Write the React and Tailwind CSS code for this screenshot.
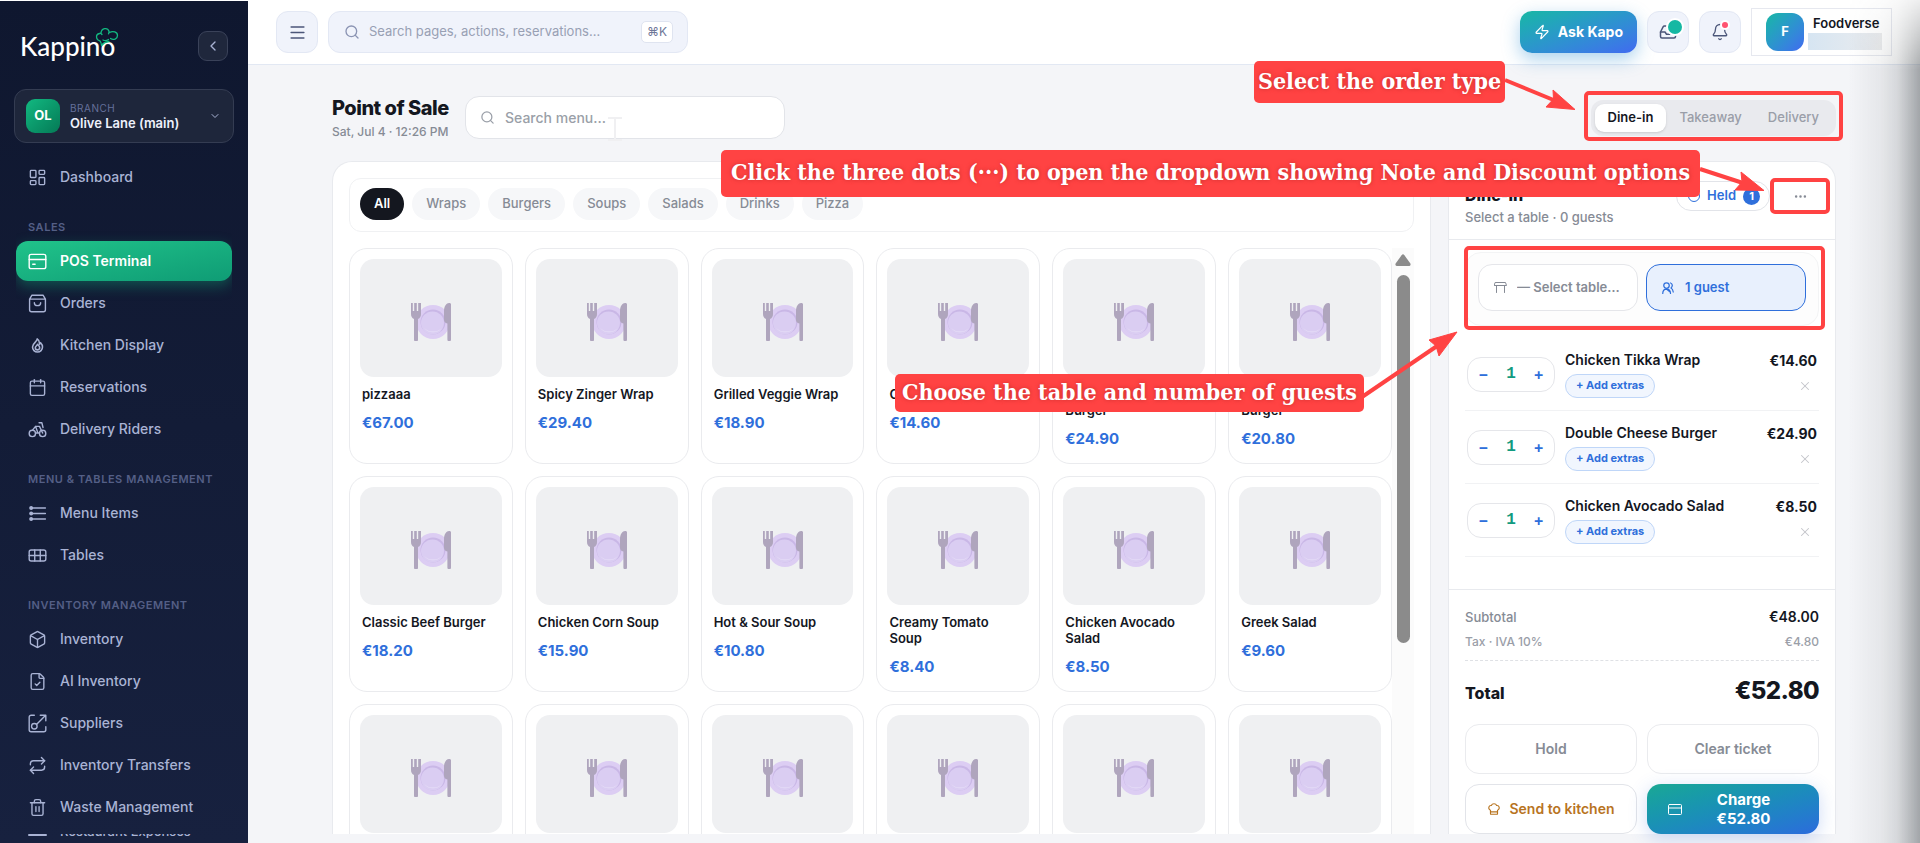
import { useState } from 'react';
import {
  LayoutDashboard, Calendar, Box, FileCheck, Repeat, Trash2, Inbox,
  Search, Menu, ChevronLeft, ChevronDown, Zap, Bell, ChefHat, Ellipsis, X,
} from 'lucide-react';

const NAV = [
  { items: [{ label: 'Dashboard', icon: LayoutDashboard }] },
  {
    title: 'Sales',
    items: [
      { label: 'POS Terminal', icon: CardIcon, active: true },
      { label: 'Orders', icon: BagIcon },
      { label: 'Kitchen Display', icon: FlameIcon, small: true },
      { label: 'Reservations', icon: Calendar },
      { label: 'Delivery Riders', icon: RiderIcon },
    ],
  },
  {
    title: 'Menu & Tables Management',
    items: [
      { label: 'Menu Items', icon: MenuListIcon },
      { label: 'Tables', icon: TableGridIcon },
    ],
  },
  {
    title: 'Inventory Management',
    items: [
      { label: 'Inventory', icon: Box },
      { label: 'AI Inventory', icon: FileCheck },
      { label: 'Suppliers', icon: SupplierIcon },
      { label: 'Inventory Transfers', icon: Repeat },
      { label: 'Waste Management', icon: Trash2 },
    ],
  },
];

const CATEGORIES = ['All', 'Wraps', 'Burgers', 'Soups', 'Salads', 'Drinks', 'Pizza'];
const ORDER_TYPES = ['Dine-in', 'Takeaway', 'Delivery'];

const PRODUCTS = [
  { name: 'pizzaaa', price: '€67.00' },
  { name: 'Spicy Zinger Wrap', price: '€29.40' },
  { name: 'Grilled Veggie Wrap', price: '€18.90' },
  { name: 'Chicken Tikka Wrap', price: '€14.60' },
  { name: 'Double Cheese Burger', price: '€24.90' },
  { name: 'Crispy Chicken Burger', price: '€20.80' },
  { name: 'Classic Beef Burger', price: '€18.20' },
  { name: 'Chicken Corn Soup', price: '€15.90' },
  { name: 'Hot & Sour Soup', price: '€10.80' },
  { name: 'Creamy Tomato Soup', price: '€8.40' },
  { name: 'Chicken Avocado Salad', price: '€8.50' },
  { name: 'Greek Salad', price: '€9.60' },
  { name: 'Caesar Salad', price: '€9.20' },
  { name: 'Mango Lassi', price: '€4.50' },
  { name: 'Fresh Lemonade', price: '€3.90' },
  { name: 'Iced Tea', price: '€3.50' },
  { name: 'Margherita', price: '€11.00' },
  { name: 'Pepperoni', price: '€12.50' },
];

const TICKET = [
  { name: 'Chicken Tikka Wrap', price: '€14.60', qty: 1 },
  { name: 'Double Cheese Burger', price: '€24.90', qty: 1 },
  { name: 'Chicken Avocado Salad', price: '€8.50', qty: 1 },
];

export default function App() {
  return (
    <div className="relative flex h-screen overflow-hidden bg-[#f4f5f8] font-['Inter',sans-serif] text-[#14171f]">
      <Sidebar />
      <div className="flex min-w-0 flex-1 flex-col">
        <TopBar />
        <PointOfSale />
      </div>
      <div className="pointer-events-none absolute inset-y-0 right-0 w-[72px] bg-[linear-gradient(to_right,rgba(70,76,80,0)_0%,rgba(70,76,80,0.08)_45%,rgba(70,76,80,0.17)_68%,rgba(70,76,80,0.47)_100%)] [mask-image:linear-gradient(to_bottom,rgba(0,0,0,0.2),black_70px)]" />
      <Callouts />
    </div>
  );
}

function Sidebar() {
  return (
    <aside className="flex w-[248px] shrink-0 flex-col border-t border-white bg-linear-to-b from-[#0f172f] to-[#17213f] text-[#a9b3d4]">
      <div className="flex h-[60px] items-end justify-between pl-5 pr-5">
        <Logo />
        <button aria-label="Collapse sidebar" className="flex size-[30px] items-center justify-center rounded-[9px] border border-[#3a4259] bg-[#1f273c]">
          <ChevronLeft className="size-4" />
        </button>
      </div>

      <button className="mx-[14px] mt-7 flex h-[54px] shrink-0 items-center rounded-xl border border-[#343c52] bg-[#1e263b] pl-[11px] pr-3 text-left">
        <span className="flex size-[34px] items-center justify-center rounded-[9px] bg-linear-to-br from-[#12b981] to-[#057a56] text-[13px] font-bold text-white">
          OL
        </span>
        <span className="ml-[10px] flex-1">
          <span className="block text-[10px] leading-[14px] tracking-wider text-[#65709a]">BRANCH</span>
          <span className="block text-[13px] font-semibold leading-4 text-[#eef1fb]">Olive Lane (main)</span>
        </span>
        <ChevronDown className="size-3" />
      </button>

      <nav className="mx-4 mt-[14px] min-h-0 flex-1 overflow-hidden">
        {NAV.map((group, i) => (
          <div key={i} className={i ? 'mt-[23px]' : ''}>
            {group.title && (
              <h2 className="px-3 pb-[7px] text-[11px] font-semibold uppercase leading-[14px] tracking-wider text-[#545f86]">
                {group.title}
              </h2>
            )}
            <ul className="space-y-[2px]">
              {group.items.map(item => <NavItem key={item.label} {...item} />)}
            </ul>
          </div>
        ))}
      </nav>

      <div className="mx-4 mb-[5px] flex h-1 shrink-0 items-end gap-[13px] overflow-hidden pl-3 text-[13px] font-medium leading-[14px]">
        <span className="mb-[2px] h-[2px] w-[19px] rounded-full bg-current" />
        <a href="#expenses">Restaurant Expenses</a>
      </div>
    </aside>
  );
}

function NavItem({ label, icon: Icon, active, small }) {
  return (
    <li>
      <a
        href="#"
        className={`flex h-10 items-center gap-[13px] rounded-xl px-3 text-sm ${
          active
            ? 'bg-linear-to-br from-[#20c38a] to-[#0f9c75] font-semibold text-white shadow-[0_5px_14px_rgba(16,185,129,0.35)]'
            : 'font-medium'
        }`}
      >
        <span className="flex size-[19px] items-center justify-center">
          <Icon className={small ? 'size-[15px]' : 'size-[19px]'} strokeWidth={small ? 2.5 : 1.75} />
        </span>
        {label}
      </a>
    </li>
  );
}

function TopBar() {
  return (
    <header className="flex h-[65px] shrink-0 items-center border-b border-[#e2e8f3] bg-white pl-7 pr-7">
      <button aria-label="Toggle menu" className="flex size-[42px] items-center justify-center rounded-xl border border-[#e3e8f4] bg-[#f0f3fb] text-[#4b5679]">
        <Menu className="size-[19px]" />
      </button>
      <label className="ml-[10px] flex h-[42px] w-[360px] items-center rounded-xl border border-[#e3e8f4] bg-[#f0f3fb] pl-[15px] pr-[14px]">
        <Search className="size-4 shrink-0 text-[#8b94b3]" />
        <input
          aria-label="Search pages"
          placeholder="Search pages, actions, reservations…"
          className="ml-[9px] min-w-0 flex-1 bg-transparent text-[13px] outline-none placeholder:text-[#98a0b4]"
        />
        <kbd className="flex h-[22px] w-8 items-center justify-center rounded-[5px] border border-[#dfe4f0] bg-white font-['Inter','DejaVu_Sans',sans-serif] text-xs text-[#6d7697]">
          ⌘K
        </kbd>
      </label>

      <div className="ml-auto flex items-center gap-[10px]">
        <button className="flex h-[42px] items-center gap-2 rounded-xl bg-linear-to-br from-[#18b7a4] to-[#4169f0] px-[14px] text-sm font-bold text-white shadow-[0_6px_18px_rgba(40,140,210,0.4)]">
          <Zap className="size-4" strokeWidth={1.75} />
          Ask Kapo
        </button>
        <button aria-label="Inbox" className="relative flex size-[42px] items-center justify-center rounded-xl border border-[#e3e8f4] bg-[#f0f3fb] text-[#4b5679]">
          <Inbox className="size-[18px]" />
          <span className="absolute right-[6px] top-2 size-[14px] rounded-full bg-[#16b8a3] ring-2 ring-white" />
        </button>
        <button aria-label="Notifications" className="relative flex size-[42px] items-center justify-center rounded-xl border border-[#e3e8f4] bg-[#f0f3fb] text-[#4b5679]">
          <Bell className="size-[18px]" strokeWidth={1.75} />
          <span className="absolute right-3 top-[10px] size-[6px] rounded-full bg-[#ff5470] ring-2 ring-white" />
        </button>
        <button className="flex h-12 w-[141px] items-center border border-[#e6e8ef] pl-[14px] text-left">
          <span className="flex size-[38px] shrink-0 items-center justify-center rounded-xl bg-linear-to-br from-[#18b7a4] to-[#4169f0] text-[13px] font-bold text-white">
            F
          </span>
          <span className="ml-1 flex flex-col">
            <span className="pl-[5px] text-[13px] font-semibold leading-[17px]">Foodverse</span>
            <span className="mt-[1px] h-[17px] w-[74px] bg-linear-to-r from-[#d6e5f2] to-[#ebecee]" />
          </span>
        </button>
      </div>
    </header>
  );
}

function PointOfSale() {
  const [type, setType] = useState('Dine-in');

  return (
    <main className="flex min-h-0 flex-1 flex-col pb-[9px] pl-[84px] pr-[84px] pt-[31px]">
      <div className="flex h-[43px] shrink-0 items-center">
        <div className="w-[133px]">
          <h1 className="whitespace-nowrap text-xl font-extrabold leading-7 tracking-tight">Point of Sale</h1>
          <p className="whitespace-nowrap text-xs font-medium leading-5 text-[#868b95]">Sat, Jul 4 · 12:26 PM</p>
        </div>
        <label className="flex h-[43px] w-80 items-center rounded-[14px] border border-[#e2e4e9] bg-white px-[14px]">
          <Search className="size-[15px] shrink-0 text-[#9a9fa8]" />
          <input
            aria-label="Search menu"
            placeholder="Search menu…"
            className="ml-[10px] min-w-0 flex-1 text-sm font-medium outline-none placeholder:text-[#9a9fa8]"
          />
        </label>
        <div className="relative ml-auto flex h-9 items-center rounded-xl bg-[#e9eaee] p-1">
          {ORDER_TYPES.map(t => (
            <button
              key={t}
              onClick={() => setType(t)}
              className={`h-7 rounded-[9px] px-[13px] text-[13px] ${
                t === type ? 'bg-white font-semibold shadow-sm' : 'font-medium text-[#9a9ea8]'
              }`}
            >
              {t}
            </button>
          ))}
          <Ring className="-inset-x-[7px] -bottom-[5px] -top-[9px]" />
        </div>
      </div>

      <div className="mt-[22px] flex min-h-0 flex-1 gap-[17px]">
        <MenuPanel />
        <TicketPanel type={type} />
      </div>
    </main>
  );
}

function MenuPanel() {
  const [category, setCategory] = useState('All');

  return (
    <section className="flex min-w-0 flex-1 flex-col overflow-hidden rounded-t-[20px] border border-b-0 border-[#e8eaee] bg-white px-4 pt-4">
      <div className="flex h-[54px] shrink-0 gap-2 rounded-xl border border-[#f0f1f3] px-[10px] pt-[9px]">
        {CATEGORIES.map(c => (
          <button
            key={c}
            onClick={() => setCategory(c)}
            className={`h-8 rounded-full px-[14px] text-[13px] ${
              c === category ? 'bg-[#14171f] font-semibold text-white' : 'bg-[#f6f7f9] font-medium text-[#868b95]'
            }`}
          >
            {c}
          </button>
        ))}
      </div>

      <div className="mt-4 flex min-h-0 flex-1">
        <div className="grid min-w-0 flex-1 grid-cols-6 content-start gap-3 overflow-hidden">
          {PRODUCTS.map(p => <ProductCard key={p.name} {...p} />)}
        </div>
        <div className="flex w-[22px] flex-col items-center bg-[#fbfbfb] pt-[6px]">
          <svg className="h-[12px] w-[16px] text-[#8b8b8b]" viewBox="0 0 16 12" fill="currentColor">
            <path d="M6.600 1.200Q8-.6 9.400 1.200L15.400 9.400Q16 12 14 12H2Q0 12 .6 9.400Z" />
          </svg>
          <span className="mt-[9px] h-[368px] w-[13px] rounded-full bg-[#8b8b8b]" />
        </div>
      </div>
    </section>
  );
}

function ProductCard({ name, price }) {
  return (
    <button className="flex h-[216px] flex-col rounded-[18px] border border-[#eaebee] bg-white p-[10px] text-left">
      <span className="flex h-[118px] w-full shrink-0 items-center justify-center rounded-[14px] bg-[#eff0f2] pt-2">
        <PlateIcon className="h-[38px] w-[42px]" />
      </span>
      <span className="mt-[9px] block pl-[2px] pr-[10px] text-[13px] font-semibold leading-4">{name}</span>
      <span className="mt-[11px] block pl-[2px] text-[15px] font-bold leading-5 text-[#2f6fdb]">{price}</span>
    </button>
  );
}

function TicketPanel({ type }) {
  return (
    <section className="flex w-[388px] shrink-0 flex-col rounded-t-[20px] border border-b-0 border-[#e8eaee] bg-white">
      <div className="flex h-[78px] shrink-0 items-end justify-between border-b border-[#e8eaee] pb-3 pl-4 pr-[9px]">
        <div>
          <h2 className="text-base font-extrabold leading-6">{type}</h2>
          <p className="text-[13px] font-medium leading-5 text-[#868b95]">Select a table · 0 guests</p>
        </div>
        <div className="mb-[13px] flex items-center">
          <button className="flex h-[30px] items-center gap-[7px] rounded-full border border-[#e2e4e9] pl-[11px] pr-[9px] text-[13px] font-semibold text-[#2f6fdb]">
            <span className="size-3 rounded-full border border-[#2f6fdb]" />
            Held
            <span className="flex size-[17px] items-center justify-center rounded-full bg-[#2f6fdb] text-[11px] font-bold text-white">1</span>
          </button>
          <button aria-label="More options" className="relative ml-1 flex h-9 w-[52px] items-center justify-center text-[#868b95]">
            <Ellipsis className="size-[15px]" />
            <Ring className="-inset-x-1 inset-y-0" />
          </button>
        </div>
      </div>

      <div className="min-h-0 flex-1 px-4 pt-3">
        <div className="relative grid h-[74px] grid-cols-2 gap-2 rounded-2xl border border-[#f3f4f5] bg-[#fdfdfd] px-3 pt-[11px]">
          <button className="flex h-[47px] min-w-0 items-center gap-[10px] rounded-[14px] border border-[#e5e6ea] bg-white pl-[15px] pr-2 text-[13px] font-semibold text-[#868b95]">
            <TableIcon className="h-[11px] w-[13px] shrink-0" />
            <span className="truncate">— Select table…</span>
          </button>
          <button className="flex h-[47px] min-w-0 items-center gap-[11px] rounded-[14px] border border-[#2f6fdb] bg-[#e8f0fd] px-[15px] text-[13px] font-semibold text-[#2f6fdb]">
            <GuestsIcon className="h-[12px] w-[12px] shrink-0" />
            1 guest
          </button>
          <Ring className="-bottom-[5px] -left-[2px] -right-[7px] -top-[7px]" />
        </div>
        <ul className="mt-3">
          {TICKET.map(line => <TicketLine key={line.name} {...line} />)}
        </ul>
      </div>

      <div className="shrink-0 border-t border-[#e8eaee] px-4 pt-[15px]">
        <div className="flex items-center justify-between leading-6">
          <span className="text-[13px] font-medium text-[#868b95]">Subtotal</span>
          <span className="text-sm font-semibold">€48.00</span>
        </div>
        <div className="mt-[1px] flex items-center justify-between text-xs font-medium leading-6 text-[#9a9ea8]">
          <span>Tax · IVA 10%</span>
          <span>€4.80</span>
        </div>
        <div className="mt-[6px] flex items-baseline justify-between border-t border-dashed border-[#dfe1e5] pt-[14px]">
          <span className="text-base font-extrabold">Total</span>
          <span className="text-2xl font-extrabold leading-8 tracking-tight">€52.80</span>
        </div>
        <div className="mt-[17px] grid grid-cols-2 gap-[10px] text-sm font-semibold">
          <button className="h-[50px] rounded-[14px] border border-[#eaebee] text-[#868b95]">Hold</button>
          <button className="h-[50px] rounded-[14px] border border-[#eaebee] text-[#868b95]">Clear ticket</button>
          <button className="flex h-[50px] items-center justify-center gap-2 rounded-[14px] border border-[#e2e4e9] text-[#b8741f]">
            <ChefHat className="size-[14px]" />
            Send to kitchen
          </button>
          <button className="flex h-[50px] items-center rounded-[14px] bg-linear-to-br from-[#1ba893] to-[#2c6bdc] pl-[21px] pr-[14px] text-[15px] font-bold leading-[19px] text-white shadow-[0_4px_18px_rgba(60,110,220,0.25)]">
            <CardPlainIcon className="h-[11px] w-[14px]" />
            <span className="flex-1 px-5">Charge €52.80</span>
          </button>
        </div>
      </div>
    </section>
  );
}

function TicketLine({ name, price, qty }) {
  return (
    <li className="flex h-[73px] items-center border-b border-[#f1f2f4] px-[2px]">
      <div className="flex h-[35px] w-[88px] items-center justify-between rounded-[14px] border border-[#e5e6ea] px-[10px] text-[#2f6fdb]">
        <button aria-label={`Remove one ${name}`} className="text-base font-semibold">−</button>
        <span className="font-['Liberation_Mono',monospace] text-base font-bold text-[#129b80]">{qty}</span>
        <button aria-label={`Add one ${name}`} className="text-base font-semibold">+</button>
      </div>
      <div className="ml-[10px] flex-1">
        <p className="whitespace-nowrap text-sm font-semibold leading-[18px]">{name}</p>
        <button className="mt-[5px] block h-6 rounded-full border border-[#bfd6f8] bg-[#f1f6fe] px-[10px] text-[11px] font-bold text-[#2f6fdb]">
          + Add extras
        </button>
      </div>
      <div className="flex flex-col items-end pb-[3px]">
        <span className="text-sm font-bold leading-[18px]">{price}</span>
        <button aria-label={`Delete ${name}`} className="mr-[5px] mt-[9px] text-[#c3c5ca]">
          <X className="size-[14px]" strokeWidth={1.75} />
        </button>
      </div>
    </li>
  );
}

/* Tutorial annotations on top of the page */

function Ring({ className }) {
  return <span className={`pointer-events-none absolute rounded-[5px] border-4 border-[#ff4343] ${className}`} />;
}

function Callouts() {
  return (
    <div className="pointer-events-none absolute inset-0">
      <Callout className="right-[415px] top-[61px] h-[42px] w-[251px]">Select the order type</Callout>
      <Callout className="right-[220px] top-[150px] h-[47px] w-[979px]">
        Click the three dots (···) to open the dropdown showing Note and Discount options
      </Callout>
      <Callout className="right-[556px] top-[374px] h-[38px] w-[469px]">Choose the table and number of guests</Callout>
      <svg className="absolute right-0 top-0 h-[360px] w-[560px] overflow-visible" viewBox="1360 0 560 360" fill="#ff4343" stroke="#ff4343">
        <path d="M1505 80 1556 101" strokeWidth="4" />
        <path d="M1575 109.500 1553 90 1553.500 99 1546 107Z" strokeLinejoin="round" />
        <path d="M1700 169 1746 184" strokeWidth="4" />
        <path d="M1764 190.500 1741 172 1742 182 1735 190Z" strokeLinejoin="round" />
        <path d="M1362 397 1440 344" strokeWidth="4" />
        <path d="M1457 332 1429 340 1436 346 1439 356Z" strokeLinejoin="round" />
      </svg>
      {/* text cursor over the menu search */}
      <svg className="absolute left-[608px] top-[117px] h-[24px] w-[14px]" viewBox="0 0 14 24" fill="none" stroke="#f0f0f2" strokeWidth="2">
        <path d="M0 1h14M7 1v22M0 23h14" />
      </svg>
    </div>
  );
}

function Callout({ className, children }) {
  return (
    <p
      className={`absolute flex items-center justify-center whitespace-nowrap rounded-[5px] bg-[#ff4343] pb-[2px] font-['DejaVu_Serif_Condensed','DejaVu_Serif',serif] text-[23px] font-bold text-white [text-shadow:0_0_4px_#c92f2f] ${className}`}
    >
      {children}
    </p>
  );
}

/* Icons */

function Logo() {
  return (
    <span className="relative flex h-[29px] items-center text-[26px] leading-[29px] text-white">
      <span className="font-['Lato',sans-serif] font-medium">Kappino</span>
      <svg className="absolute -right-[4px] -top-[5px] h-[20px] w-[24px] text-[#12b981]" viewBox="0 0 24 20" fill="none" stroke="currentColor" strokeWidth="1.3" strokeLinecap="round">
        <path d="M6.500 18.500C6.500 16.500 6 15 4.800 13.800 1 13 0 7.500 4.500 6.500 5.500 6.300 6.500 6.800 7 7.500M6 6C6.500 1 12.500 0 14 4.200 14.200 5.200 14 6 13.500 6.800M14.500 5.500C18 3.500 22.500 5 22.500 8.500 22.500 12 18.500 13.500 15.500 11.500M7 18C8.500 16 11.500 14.800 14 14.500M8 13C9.500 13.800 12 13.500 13.500 12.500" />
      </svg>
    </span>
  );
}

function Svg({ children, viewBox = '0 0 24 24', strokeWidth = 1.75, className }) {
  return (
    <svg className={className} viewBox={viewBox} fill="none" stroke="currentColor" strokeWidth={strokeWidth} strokeLinecap="round" strokeLinejoin="round">
      {children}
    </svg>
  );
}

function CardIcon(props) {
  return <Svg {...props}><rect x="1.500" y="3" width="21" height="18" rx="2.500" /><path d="M1.500 9.500h21M6 15.500h3" /></Svg>;
}

function BagIcon(props) {
  return <Svg {...props}><path d="M2 6.500 5 1.500h14l3 5V20a2.500 2.500 0 0 1-2.500 2.500h-15A2.500 2.500 0 0 1 2 20ZM2 6.500h20M8 11c0 5 8 5 8 0" /></Svg>;
}

function FlameIcon(props) {
  return (
    <Svg {...props}>
      <path d="M11.500 1.500c.5 4-7.500 6.500-7.500 13a8 8 0 0 0 16 0c0-3-1.500-5.500-3-7-.5 1.500-1 2-2 2.500.5-3.500-1-7-3.500-8.500Z" />
      <path d="M12 10c0 2-3.500 3-3.500 5.500a3.500 3.500 0 0 0 7 0c0-2-1.500-3-3.500-5.500Z" />
    </Svg>
  );
}

function RiderIcon(props) {
  return (
    <Svg {...props}>
      <circle cx="5.500" cy="17" r="4" />
      <circle cx="18.500" cy="17" r="4" />
      <path d="M6 12.500 9.500 8h5l4 8.500M9.500 8l3 8.500H9.500M14.500 16.500h-2M14 3.500h3.500l1.500 6" />
    </Svg>
  );
}

function MenuListIcon(props) {
  return (
    <Svg {...props}>
      <path d="M3 5h19M3 12h19M3 19h19" />
      <g fill="currentColor"><circle cx="4" cy="5" r="1.600" /><circle cx="4" cy="12" r="1.600" /><circle cx="4" cy="19" r="1.600" /></g>
    </Svg>
  );
}

function TableGridIcon(props) {
  return <Svg {...props}><rect x="1.500" y="5" width="21" height="14" rx="2.500" /><path d="M1.500 12h21M8.500 5v14M15.500 5v14" /></Svg>;
}

function SupplierIcon(props) {
  return (
    <Svg {...props}>
      <path d="M8 1.500H4A2.500 2.500 0 0 0 1.500 4v16A2.500 2.500 0 0 0 4 22.500h16a2.500 2.500 0 0 0 2.500-2.500v-4M11 13 22 2M15.500 1.500h7v7" />
      <circle cx="8" cy="15.500" r="3.500" />
    </Svg>
  );
}

function TableIcon({ className }) {
  return <Svg className={className} viewBox="0 0 26 22" strokeWidth={2}><path d="M3 1h20l2 6H1ZM5 7v14M21 7v14" /></Svg>;
}

function GuestsIcon({ className }) {
  return (
    <Svg className={className} strokeWidth={2.5}>
      <circle cx="9" cy="7" r="5.500" />
      <path d="M1.500 23c0-6 3-9 7.500-9s8 3 8 9M17 2c4 1 5 7 1 10 2 1 4 4 4.500 8M9 14l6 5" />
    </Svg>
  );
}

function CardPlainIcon({ className }) {
  return <Svg className={className} viewBox="0 0 28 22" strokeWidth={2}><rect x="1" y="1" width="26" height="20" rx="2" /><path d="M1 8h26" /></Svg>;
}

function PlateIcon({ className }) {
  return (
    <svg className={className} viewBox="0 0 42 38">
      <circle cx="23" cy="19" r="17" fill="#dccdf3" />
      <circle cx="23" cy="19" r="12.500" fill="#c9b7e6" />
      <circle cx="22.500" cy="20" r="11.500" fill="#dacdf2" />
      <path d="M14 25a11.500 11.500 0 0 0 18 0 13 13 0 0 1-18 0Z" fill="#e8e1f7" />
      <path d="M1 0h1.800v8h1.400V0h2.600v8h1.400V0H11v11c0 2.500-1 4-3 5v20.500a2 2 0 0 1-4 0V16c-2-1-3-2.500-3-5Z" fill="#afa5bd" />
      <path d="M41 1v35.500a1.800 1.800 0 0 1-3.600 0V20.500c-2.500-.5-3.400-2-3.400-4V8c0-5 2.500-8 5-8a2 2 0 0 1 2 1Z" fill="#afa5bd" />
    </svg>
  );
}
